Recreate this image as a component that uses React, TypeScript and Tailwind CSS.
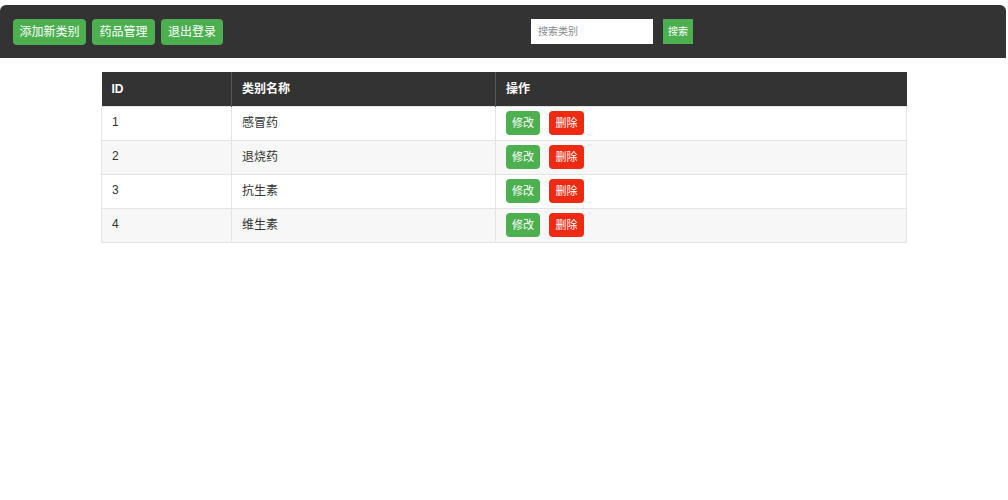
const categories = [
  { id: 1, name: '感冒药' },
  { id: 2, name: '退烧药' },
  { id: 3, name: '抗生素' },
  { id: 4, name: '维生素' },
]

const font = { fontFamily: '"Liberation Sans", "Noto Sans CJK SC", sans-serif' }

export default function App() {
  return (
    <div className="min-h-[500px] bg-white pt-[5px] text-[12px] text-[#333]" style={font}>
      <div className="mr-[2px] flex h-[53px] items-center rounded-t-md bg-[#333] pl-[13px]">
        <button className="h-[26px] w-[73px] rounded bg-[#4caf50] text-[12px] text-white">添加新类别</button>
        <button className="ml-[6px] h-[26px] w-[63px] rounded bg-[#4caf50] text-[12px] text-white">药品管理</button>
        <button className="ml-[6px] h-[26px] w-[62px] rounded bg-[#4caf50] text-[12px] text-white">退出登录</button>
        <input
          placeholder="搜索类别"
          className="ml-[308px] h-[25px] w-[122px] bg-white px-[7px] text-[10px] text-[#333] outline-none placeholder:text-[#888]"
        />
        <button className="ml-[10px] h-[25px] w-[30px] bg-[#4caf50] text-[10px] text-white">搜索</button>
      </div>

      <table className="mx-auto mt-[14px] w-[806px] border-collapse text-left">
        <thead>
          <tr className="h-[34px] bg-[#333] text-white">
            <th className="w-[130px] border-r border-[#555] px-[10px] font-bold">ID</th>
            <th className="w-[264px] border-r border-[#555] px-[10px] font-bold">类别名称</th>
            <th className="px-[10px] font-bold">操作</th>
          </tr>
        </thead>
        <tbody>
          {categories.map((c, i) => (
            <tr key={c.id} className={`h-[34px] border border-[#e3e3e3] ${i % 2 ? 'bg-[#f7f7f7]' : 'bg-white'}`}>
              <td className="border-r border-[#e3e3e3] px-[10px] pb-[2px]">{c.id}</td>
              <td className="border-r border-[#e3e3e3] px-[10px]">{c.name}</td>
              <td className="px-[10px]">
                <div className="flex items-center gap-[9px]">
                  <button className="h-[24px] w-[34px] rounded bg-[#4caf50] text-[11px] text-white">修改</button>
                  <button className="h-[24px] w-[35px] rounded bg-[#ee2a12] text-[11px] text-white">删除</button>
                </div>
              </td>
            </tr>
          ))}
        </tbody>
      </table>
    </div>
  )
}
